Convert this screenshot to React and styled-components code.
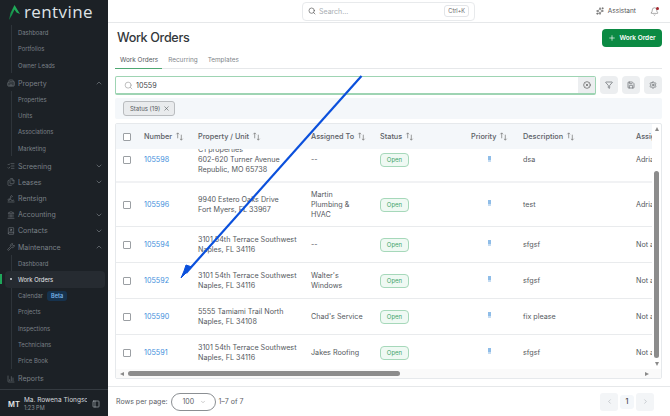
import styled, { createGlobalStyle } from 'styled-components';
import {
  Search, Sparkles, Bell, Plus, X, Filter, Save, Settings, CircleX, ChevronUp, ChevronDown,
  ChevronLeft, ChevronRight, Building2, ListChecks, Files, Signature, Landmark, BookUser,
  Wrench, ChartColumn, PanelLeft,
} from 'lucide-react';

const GlobalStyle = createGlobalStyle`
  html, body { margin: 0; padding: 0; height: 100%; overflow: hidden; background: #fff; }
  body { font-family: Inter, "Liberation Sans", sans-serif; }
  * { box-sizing: border-box; }
`;

const rows = [
  { id: '105598', lines: ['C1 properties', '602-620 Turner Avenue', 'Republic, MO 65738'], who: ['--'], desc: 'dsa', assign: 'Adria', height: 44, clip: true },
  { id: '105596', lines: ['9940 Estero Oaks Drive', 'Fort Myers, FL 33967'], who: ['Martin', 'Plumbing &', 'HVAC'], desc: 'test', assign: 'Adria', height: 44 },
  { id: '105594', lines: ['3101 54th Terrace Southwest', 'Naples, FL 34116'], who: ['--'], desc: 'sfgsf', assign: 'Not a', height: 36 },
  { id: '105592', lines: ['3101 54th Terrace Southwest', 'Naples, FL 34116'], who: ["Walter's", 'Windows'], desc: 'sfgsf', assign: 'Not a', height: 36 },
  { id: '105590', lines: ['5555 Tamiami Trail North', 'Naples, FL 34108'], who: ["Chad's Service"], desc: 'fix please', assign: 'Not a', height: 36 },
  { id: '105591', lines: ['3101 54th Terrace Southwest', 'Naples, FL 34116'], who: ['Jakes Roofing'], desc: 'sfgsf', assign: 'Not a', height: 35 },
];

const SubItems = ({ items }) => (
  <SubList>
    {items.map(item => (
      <SubItem key={item}>{item}</SubItem>
    ))}
  </SubList>
);

const Parent = ({ icon: Icon, label, chevron }) => (
  <ParentItem>
    <Icon size={8} strokeWidth={1.6} />
    <span>{label}</span>
    {chevron === 'up' && <ChevronUp size={8} />}
    {chevron === 'down' && <ChevronDown size={8} />}
  </ParentItem>
);

const SortHead = ({ children }) => (
  <HeadCell>
    {children}
    <SortIcon viewBox="0 0 10 10">
      <path d="M3 7V1M1.500 2.500 3 1l1.500 1.500M7 3v6M5.500 7.500 7 9l1.500-1.500" />
    </SortIcon>
  </HeadCell>
);

export default function App() {
  return (
    <Page>
      <GlobalStyle />
      <Sidebar>
        <Logo>
          <svg width="11" height="15" viewBox="0 0 11 15">
            <defs>
              <linearGradient id="logoGreen" x1="0" y1="1" x2="1" y2="0">
                <stop offset="0" stopColor="#0f7d42" />
                <stop offset="1" stopColor="#27c063" />
              </linearGradient>
            </defs>
            <path d="M5.500 0 11 9 7.500 7.500 5.500 4.500 3 10 0 15 1.500 8Z" fill="url(#logoGreen)" />
          </svg>
          <LogoText>rentvine</LogoText>
        </Logo>
        <Nav>
          <SubItems items={['Dashboard', 'Portfolios', 'Owner Leads']} />
          <Parent icon={Building2} label="Property" chevron="up" />
          <SubItems items={['Properties', 'Units', 'Associations', 'Marketing']} />
          <Parent icon={ListChecks} label="Screening" chevron="down" />
          <Parent icon={Files} label="Leases" chevron="down" />
          <Parent icon={Signature} label="Rentsign" />
          <Parent icon={Landmark} label="Accounting" chevron="down" />
          <Parent icon={BookUser} label="Contacts" chevron="down" />
          <Parent icon={Wrench} label="Maintenance" chevron="up" />
          <SubList>
            <SubItem>Dashboard</SubItem>
            <ActiveItem>Work Orders</ActiveItem>
            <SubItem>
              Calendar <Beta>Beta</Beta>
            </SubItem>
            <SubItem>Projects</SubItem>
            <SubItem>Inspections</SubItem>
            <SubItem>Technicians</SubItem>
            <SubItem>Price Book</SubItem>
          </SubList>
          <Parent icon={ChartColumn} label="Reports" />
        </Nav>
        <UserBlock>
          <Initials>MT</Initials>
          <UserText>
            <UserName>Ma. Rowena Tiongsc</UserName>
            <UserTime>1:23 PM</UserTime>
          </UserText>
          <PanelLeft size={8} color="#aab0b6" />
        </UserBlock>
      </Sidebar>

      <Main>
        <TopBar>
          <GlobalSearch>
            <Search size={8} color="#555" />
            <span>Search...</span>
            <Kbd>Ctrl+K</Kbd>
          </GlobalSearch>
          <Assistant>
            <Sparkles size={8} />
            Assistant
          </Assistant>
          <BellWrap>
            <Bell size={9} strokeWidth={1.4} />
            <BellDot />
          </BellWrap>
        </TopBar>

        <Content>
          <TitleRow>
            <Title>Work Orders</Title>
            <PrimaryButton>
              <Plus size={8} />
              Work Order
            </PrimaryButton>
          </TitleRow>

          <Tabs>
            <Tab $active>Work Orders</Tab>
            <Tab>Recurring</Tab>
            <Tab>Templates</Tab>
          </Tabs>

          <SearchRow>
            <SearchField>
              <Search size={9} color="#aaa" />
              <SearchValue>10559</SearchValue>
              <ClearButton>
                <CircleX size={8} />
              </ClearButton>
            </SearchField>
            <IconButton><Filter size={8} /></IconButton>
            <IconButton><Save size={8} /></IconButton>
            <IconButton><Settings size={8} /></IconButton>
          </SearchRow>

          <FilterStrip>
            <Chip>
              Status (19)
              <X size={7} />
            </Chip>
          </FilterStrip>

          <TableCard>
            <TableTop>
              <TableView>
                <HeadRow>
                  <CheckCell><Checkbox /></CheckCell>
                  <SortHead>Number</SortHead>
                  <SortHead>Property / Unit</SortHead>
                  <SortHead>Assigned To</SortHead>
                  <SortHead>Status</SortHead>
                  <SortHead>Priority</SortHead>
                  <SortHead>Description</SortHead>
                  <HeadCell>Assigned</HeadCell>
                </HeadRow>
                <TableBody>
                  {rows.map(row => (
                    <Row key={row.id} $height={row.height} $clip={row.clip}>
                      <CheckCell><Checkbox /></CheckCell>
                      <NumberLink>{row.id}</NumberLink>
                      <Cell>{row.lines.map(l => <div key={l}>{l}</div>)}</Cell>
                      <Cell>{row.who.map(l => <div key={l}>{l}</div>)}</Cell>
                      <Cell><StatusPill>Open</StatusPill></Cell>
                      <Cell><PriorityMark /></Cell>
                      <Cell>{row.desc}</Cell>
                      <Cell>{row.assign}</Cell>
                    </Row>
                  ))}
                </TableBody>
              </TableView>
              <VScroll>
                <ArrowUp />
                <VThumb />
                <ArrowDown />
              </VScroll>
            </TableTop>
            <HScroll>
              <ArrowLeft />
              <HThumb />
              <ArrowRight />
            </HScroll>
          </TableCard>

          <Footer>
            <span>Rows per page:</span>
            <PageSelect>
              100
              <ChevronDown size={6} color="#999" />
            </PageSelect>
            <span>1–7 of 7</span>
            <Pager>
              <PagerButton><ChevronLeft size={7} /></PagerButton>
              <PagerCurrent>1</PagerCurrent>
              <PagerButton><ChevronRight size={7} /></PagerButton>
            </Pager>
          </Footer>
        </Content>
      </Main>

      <ArrowOverlay viewBox="0 0 670 416">
        <path d="M361.500 76 186 273" stroke="#0b50dc" strokeWidth="2.200" fill="none" />
        <path d="M181 278 192 267 186 265 184 271Z" fill="#0b50dc" stroke="#0b50dc" strokeWidth="1" />
      </ArrowOverlay>
    </Page>
  );
}

const Page = styled.div`
  position: relative;
  display: flex;
  width: 670px;
  height: 416px;
  overflow: hidden;
  color: #4a4f55;
`;

const Sidebar = styled.aside`
  width: 108px;
  flex: none;
  display: flex;
  flex-direction: column;
  background: #1c2126;
  color: #8b9197;
`;
const Logo = styled.div`
  height: 24.600px;
  display: flex;
  align-items: center;
  gap: 4px;
  padding-left: 9px;
`;
const LogoText = styled.span`
  font-family: "Open Sans", sans-serif;
  font-size: 17px;
  line-height: 24px;
  color: #dfe3e6;
  letter-spacing: 0.4px;
`;
const Nav = styled.nav`
  flex: 1;
  display: flex;
  flex-direction: column;
`;
const SubList = styled.div`
  display: flex;
  flex-direction: column;
  position: relative;
  margin-bottom: 2px;
  &::before {
    content: '';
    position: absolute;
    left: 11px;
    top: 0;
    bottom: 0;
    width: 1px;
    background: #2e343a;
  }
`;
const SubItem = styled.div`
  height: 16.200px;
  display: flex;
  align-items: center;
  gap: 4px;
  padding-left: 18px;
  font-size: 5.900px;
  color: #7a8086;
`;
const ActiveItem = styled(SubItem)`
  position: relative;
  color: #e6e8ea;
  background: #262b31;
  border-radius: 4px;
  margin-left: 5px;
  margin-right: 3px;
  padding-left: 13px;
  &::before {
    content: '';
    position: absolute;
    left: 5px;
    top: 7px;
    width: 2px;
    height: 2px;
    border-radius: 50%;
    background: #d5d8db;
  }
  &::after {
    content: '';
    position: absolute;
    left: -5px;
    top: 3px;
    width: 2px;
    height: 10px;
    background: #1fa65a;
  }
`;
const Beta = styled.span`
  padding: 2px 4px;
  border-radius: 3px;
  background: #16324d;
  color: #7cb6ea;
  font-size: 5.500px;
  font-weight: 600;
`;
const ParentItem = styled.div`
  height: 16.200px;
  display: flex;
  align-items: center;
  gap: 3px;
  padding: 0 5px 0 7px;
  font-size: 7px;
  color: #7a8086;
  span { flex: 1; }
`;
const UserBlock = styled.div`
  height: 27px;
  display: flex;
  align-items: center;
  gap: 5px;
  padding: 2px 8px 0;
  border-top: 1px solid #343a40;
`;
const Initials = styled.div`
  width: 11px;
  font-size: 7.500px;
  font-weight: 600;
  color: #e4e6e8;
`;
const UserText = styled.div`
  flex: 1;
  min-width: 0;
  line-height: 8px;
`;
const UserName = styled.div`
  font-size: 6.500px;
  color: #d8dbde;
  white-space: nowrap;
  overflow: hidden;
`;
const UserTime = styled.div`
  font-size: 5.500px;
  color: #8b9197;
`;

const Main = styled.main`
  flex: 1;
  min-width: 0;
  display: flex;
  flex-direction: column;
`;
const TopBar = styled.header`
  height: 23px;
  display: flex;
  align-items: center;
  padding: 0 11px 0 194px;
  border-bottom: 1px solid #e6e8ea;
`;
const GlobalSearch = styled.div`
  width: 173px;
  height: 19px;
  display: flex;
  align-items: center;
  gap: 3px;
  padding: 0 5px;
  border: 1px solid #e8eaec;
  border-radius: 4px;
  font-size: 7px;
  color: #a8adb2;
  span { flex: 1; }
`;
const Kbd = styled.kbd`
  padding: 2px 3px;
  border: 1px solid #e3e5e8;
  border-radius: 3px;
  font-family: inherit;
  font-size: 5.500px;
  color: #666;
`;
const Assistant = styled.div`
  display: flex;
  align-items: center;
  gap: 4px;
  margin-left: auto;
  font-size: 6.500px;
  color: #555;
`;
const BellWrap = styled.div`
  position: relative;
  display: flex;
  margin-left: 14px;
  color: #666;
`;
const BellDot = styled.i`
  position: absolute;
  top: 0;
  right: 0;
  width: 3px;
  height: 3px;
  border-radius: 50%;
  background: #a4262c;
`;

const Content = styled.div`
  flex: 1;
  display: flex;
  flex-direction: column;
  padding: 0 8px 0 7px;
`;
const TitleRow = styled.div`
  height: 29px;
  display: flex;
  align-items: center;
  justify-content: space-between;
  padding-left: 2px;
`;
const Title = styled.h1`
  margin: 0;
  font-size: 12.600px;
  font-weight: 500;
  letter-spacing: -0.35px;
  color: #33373b;
`;
const PrimaryButton = styled.button`
  width: 60px;
  height: 18px;
  display: flex;
  align-items: center;
  justify-content: center;
  gap: 3px;
  padding: 0;
  border: 0;
  border-radius: 4px;
  background: #0b8a43;
  color: #fff;
  font-family: inherit;
  font-size: 6.500px;
  font-weight: 600;
`;
const Tabs = styled.div`
  height: 17px;
  display: flex;
  border-bottom: 1px solid #e6e8ea;
`;
const Tab = styled.div`
  height: 17px;
  padding: 4px 4px 0;
  margin-right: 2px;
  font-size: 6.400px;
  color: ${p => (p.$active ? '#55595e' : '#81868b')};
  border-bottom: 1px solid ${p => (p.$active ? '#4fa873' : 'transparent')};
  &:first-child { padding-left: 5px; }
`;
const SearchRow = styled.div`
  display: flex;
  gap: 4px;
  margin-top: 7px;
`;
const SearchField = styled.div`
  flex: 1;
  height: 19px;
  display: flex;
  align-items: center;
  gap: 3px;
  padding-left: 8px;
  border: 1px solid #9ed4b3;
  border-bottom-width: 2px;
  border-radius: 2px;
`;
const SearchValue = styled.span`
  flex: 1;
  font-size: 7.200px;
  color: #44484c;
`;
const ClearButton = styled.div`
  width: 17px;
  height: 100%;
  display: flex;
  align-items: center;
  justify-content: center;
  background: #eceef0;
  color: #555;
`;
const IconButton = styled.div`
  width: 18px;
  height: 18px;
  display: flex;
  align-items: center;
  justify-content: center;
  border-radius: 4px;
  background: #eceef0;
  color: #5f6468;
`;
const FilterStrip = styled.div`
  height: 21px;
  display: flex;
  align-items: center;
  margin-top: 3px;
  padding-left: 8px;
  border-radius: 2px;
  background: #f4f7fa;
`;
const Chip = styled.div`
  width: 52px;
  height: 15px;
  display: flex;
  align-items: center;
  justify-content: space-between;
  padding: 0 4px 0 6px;
  border: 1px solid #b9bcbf;
  border-radius: 3px;
  background: #e9ebed;
  font-size: 6px;
  color: #55595d;
`;
const TableCard = styled.section`
  height: 256px;
  display: flex;
  flex-direction: column;
  margin-top: 4px;
  border: 1px solid #e6e9ec;
  border-radius: 2px;
`;
const TableTop = styled.div`
  flex: 1;
  min-height: 0;
  display: flex;
`;
const TableView = styled.div`
  width: 536px;
  flex: none;
  display: flex;
  flex-direction: column;
  overflow: hidden;
`;
const columns = '28px 54px 113px 69px 91px 52px 113px 70px';
const HeadRow = styled.div`
  position: relative;
  height: 25px;
  flex: none;
  display: grid;
  grid-template-columns: ${columns};
  align-items: center;
  background: #f4f7fa;
`;
const HeadCell = styled.div`
  display: flex;
  align-items: center;
  gap: 3px;
  font-size: 7.300px;
  font-weight: 500;
  color: #5b6066;
  white-space: nowrap;
`;
const SortIcon = styled.svg`
  width: 9px;
  height: 9px;
  fill: none;
  stroke: #777;
  stroke-width: 0.8;
`;
const CheckCell = styled.div`
  padding-left: 7px;
  display: flex;
  align-items: center;
`;
const Checkbox = styled.span`
  width: 8px;
  height: 8px;
  border: 1px solid #9b9fa3;
  border-radius: 1px;
  background: #fff;
`;
const TableBody = styled.div`
  flex: 1;
  min-height: 0;
  overflow: hidden;
`;
const Row = styled.div`
  height: ${p => p.$height}px;
  margin-top: ${p => (p.$clip ? '-10px' : '0')};
  display: grid;
  grid-template-columns: ${columns};
  align-items: center;
  border-bottom: ${p => (p.$clip ? '2px solid #f1f2f4' : '1px solid #e9ebed')};
  &:last-child { border-bottom: 0; }
`;
const Cell = styled.div`
  font-size: 7.200px;
  line-height: 10px;
  color: #55595e;
  white-space: nowrap;
`;
const NumberLink = styled(Cell)`
  color: #3f8fdc;
`;
const StatusPill = styled.span`
  display: inline-block;
  width: 29px;
  height: 14px;
  border: 1px solid #a6d8ba;
  border-radius: 4px;
  background: #eff9f3;
  color: #3fa56b;
  font-size: 6px;
  line-height: 12px;
  text-align: center;
`;
const PriorityMark = styled.i`
  display: block;
  width: 3px;
  height: 6px;
  margin: 0 0 3px 17px;
  background: linear-gradient(#8fbde8 60%, #c5dcf2 60%);
`;
const VScroll = styled.div`
  flex: 1;
  display: flex;
  flex-direction: column;
  align-items: center;
  padding-top: 3px;
`;
const ArrowUp = styled.i`
  width: 0;
  height: 0;
  border: 2.500px solid transparent;
  border-top: 0;
  border-bottom: 4px solid #8a8a8a;
`;
const ArrowDown = styled.i`
  width: 0;
  height: 0;
  margin-top: 4px;
  border: 2.500px solid transparent;
  border-bottom: 0;
  border-top: 4px solid #8a8a8a;
`;
const VThumb = styled.div`
  width: 5px;
  height: 187px;
  margin-top: 40px;
  border-radius: 3px;
  background: #8c8c8c;
`;
const HScroll = styled.div`
  height: 9px;
  flex: none;
  display: flex;
  align-items: center;
  padding: 0 12px 0 4px;
  background: #fafafa;
`;
const ArrowLeft = styled.i`
  width: 0;
  height: 0;
  border: 2.500px solid transparent;
  border-left: 0;
  border-right: 4px solid #8a8a8a;
`;
const ArrowRight = styled.i`
  width: 0;
  height: 0;
  margin-left: auto;
  border: 2.500px solid transparent;
  border-right: 0;
  border-left: 4px solid #8a8a8a;
`;
const HThumb = styled.div`
  width: 272px;
  height: 5px;
  margin-left: 4px;
  border-radius: 3px;
  background: #8c8c8c;
`;
const Footer = styled.footer`
  height: 30px;
  flex: none;
  display: flex;
  align-items: center;
  margin: 7px -8px 0 -7px;
  padding: 0 16px 0 8px;
  border-top: 1px solid #e6e8ea;
  font-size: 7px;
  color: #5b6066;
`;
const PageSelect = styled.div`
  width: 45px;
  height: 18px;
  display: flex;
  align-items: center;
  justify-content: space-between;
  margin: 0 3px;
  padding: 0 9px 0 11px;
  border: 1px solid #8b8f93;
  border-radius: 9px;
`;
const Pager = styled.div`
  display: flex;
  align-items: center;
  gap: 2px;
  margin-left: auto;
`;
const PagerButton = styled.div`
  width: 18px;
  height: 18px;
  display: flex;
  align-items: center;
  justify-content: center;
  border-radius: 3px;
  background: #f3f5f7;
  color: #aab0b5;
`;
const PagerCurrent = styled.div`
  width: 14px;
  height: 14px;
  border-radius: 3px;
  background: #f4f7fa;
  text-align: center;
  line-height: 14px;
  font-weight: 500;
  color: #444;
`;
const ArrowOverlay = styled.svg`
  position: absolute;
  inset: 0;
  width: 670px;
  height: 416px;
  pointer-events: none;
`;
